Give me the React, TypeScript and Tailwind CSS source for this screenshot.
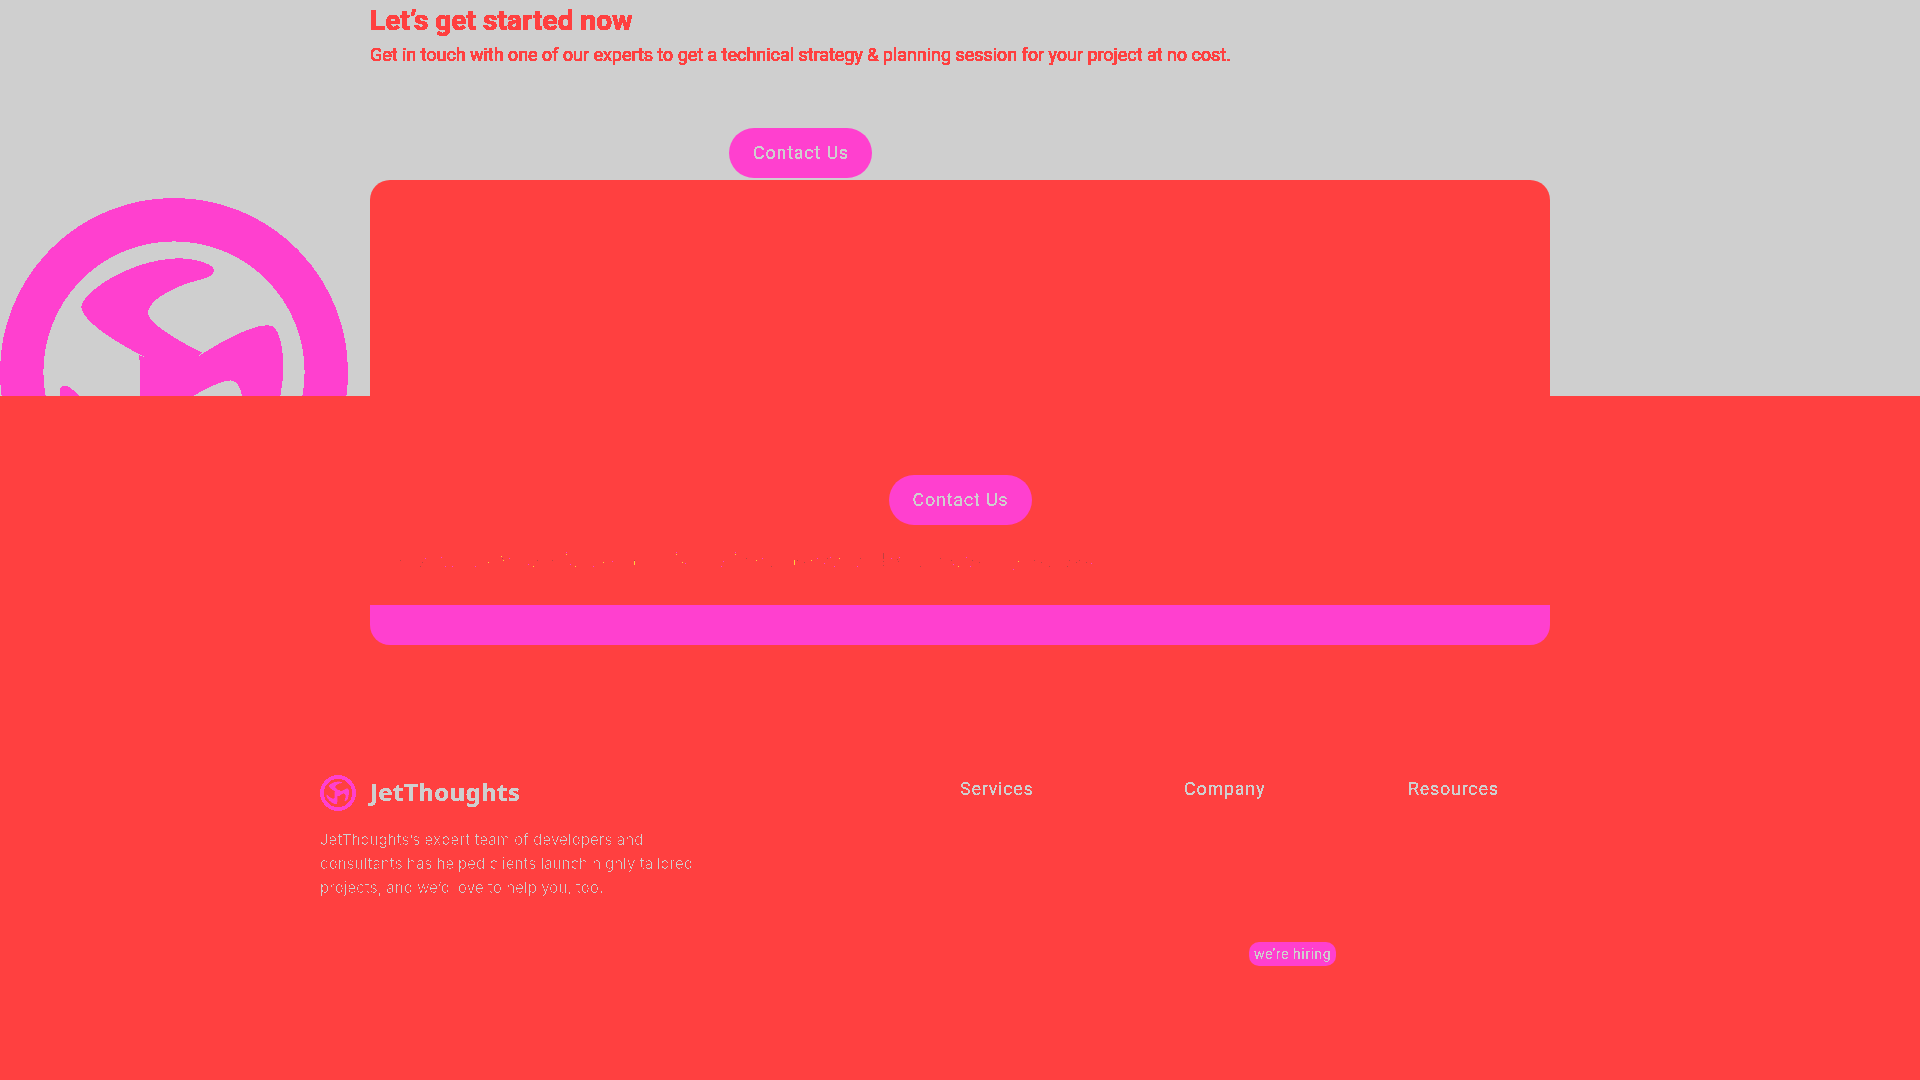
import React from "react";

const BLADE =
  "M-29-15C-50-25-92.7-50-92.7-65C-92.7-78-47-112 4-113.7C24-113.7 40-107 40-102C40-93 22-93 4-85C-14-77-26-68-26-58.5C-26-48 12-27 28.3-19.3L0 6Z";

const BLADE_TURNS = [undefined, "rotate(120 -2.5 0.2)", "rotate(240 -2.5 0.2)"];

function LogoMark({ className, small = false }: { className: string; small?: boolean }) {
  return (
    <svg viewBox="-174 -174 348 348" className={className} fill="#ff40cf" shapeRendering="crispEdges">
      <circle r={small ? 155 : 152.3} fill="none" stroke="#ff40cf" strokeWidth={small ? 36 : 43.4} />
      <g stroke={small ? "#ff4040" : "none"} strokeWidth="6">
        {BLADE_TURNS.map((turn, i) => (
          <path key={i} d={BLADE} transform={turn} />
        ))}
      </g>
      <circle cx="-2" r="30" />
    </svg>
  );
}

// Hard-edged text: each filter cuts the glyph coverage at its own level.
function CrispFilters() {
  const levels = [
    { id: "bold", table: "0 1 1 1 1 1 1 1 1 1 1 1 1 1 1 1 1 1 1 1 1 1 1 1 1 1 1 1 1 1" },
    { id: "mid", table: "0 0 0 1 1 1 1 1" },
    { id: "half", table: "0 0 1 1" },
    { id: "logo", table: "0 0 1 1 1 1" },
    { id: "thin", table: "0 0 0 0 0 0 0 0 0 0 1 1" },
  ];
  return (
    <svg className="absolute h-0 w-0" aria-hidden="true">
      {levels.map((l) => (
        <filter key={l.id} id={l.id} x="-5%" y="-20%" width="110%" height="140%" colorInterpolationFilters="sRGB">
          <feComponentTransfer>
            <feFuncA type="discrete" tableValues={l.table} />
          </feComponentTransfer>
        </filter>
      ))}
    </svg>
  );
}

function ContactButton() {
  return (
    <a className="flex h-[50px] w-[143px] items-center rounded-full bg-[#ff40cf] px-6 text-lg tracking-[0.75px] whitespace-nowrap text-[#cfcfcf]">
      <span className="[filter:url(#mid)]">Contact Us</span>
    </a>
  );
}

type Speck = [number, number, number?];

const PINK: Speck[] = [
  [25, 18], [41, 17], [45, 26], [52, 26], [75, 26], [109, 18], [128, 24], [166, 12], [170, 24], [193, 26], [212, 21],
  [276, 12], [285, 23], [321, 26], [323, 21], [335, 12], [362, 18], [417, 18], [424, 23], [430, 17], [434, 26], [457, 26],
  [491, 18], [499, 17], [553, 24], [566, 17], [570, 26], [613, 29], [691, 23],
];
const YELLOW: Speck[] = [
  [88, 22], [101, 16], [103, 20], [133, 26], [166, 14], [175, 26], [203, 22], [234, 21, 4], [276, 14], [282, 22],
  [335, 14], [356, 20], [394, 20, 5], [411, 20], [439, 18], [558, 26], [618, 21],
];
const DARK: Speck[] = [
  [0, 20], [22, 22], [20, 26], [102, 18], [137, 20], [152, 20], [234, 20], [346, 18], [371, 26], [397, 20], [404, 22],
  [427, 18], [460, 18], [483, 13, 6], [483, 21], [483, 25], [497, 19], [498, 21], [520, 26], [540, 18], [551, 20],
  [572, 20], [579, 22], [634, 20], [641, 22], [649, 26], [667, 26], [669, 20], [676, 22], [679, 20], [686, 22],
];

function Specks() {
  const layers: [string, Speck[]][] = [["#bf4040", DARK], ["#ff40cf", PINK], ["#ffcf40", YELLOW]];
  return (
    <svg width="700" height="40" className="mt-[15px] ml-[30px] shrink-0" shapeRendering="crispEdges">
      {layers.map(([fill, dots]) => (
        <g key={fill} fill={fill}>
          {dots.map(([x, y, h = 1], i) => (
            <rect key={i} x={x} y={y} width="1" height={h} />
          ))}
        </g>
      ))}
    </svg>
  );
}

export default function App() {
  return (
    <div className="flex h-[1080px] w-[1920px] flex-col overflow-hidden bg-[#ff4040] font-['Roboto',sans-serif]">
      <CrispFilters />
      <section className="flex h-[396px] shrink-0 overflow-hidden bg-[#cfcfcf]">
        <div className="w-[370px] shrink-0 pt-[198px]">
          <LogoMark className="h-[348px] w-[348px]" />
        </div>
        <div className="flex w-[1180px] flex-col">
          <h2 className="mt-px h-10 text-[28px] leading-10 font-bold tracking-[0.04px] whitespace-nowrap text-[#ff4040] [filter:url(#bold)]">
            Let’s get started now
          </h2>
          <p className="mt-0.5 h-[27px] text-lg leading-6 tracking-[-0.045px] whitespace-nowrap text-[#ff4040] [filter:url(#bold)]">
            Get in touch with one of our experts to get a technical strategy &amp; planning session for your project at no
            cost.
          </p>
          <div className="mt-[58px] flex pl-[359px]">
            <ContactButton />
          </div>
          <div className="mt-0.5 flex-1 rounded-t-[20px] bg-[#ff4040]" />
        </div>
      </section>

      <section className="mx-auto flex h-[249px] w-[1180px] shrink-0 flex-col overflow-hidden rounded-b-[20px]">
        <div className="flex justify-center pt-[79px]">
          <ContactButton />
        </div>
        <Specks />
        <div className="mt-auto h-10 shrink-0 bg-[#ff40cf]" />
      </section>

      <footer className="mt-[130px] flex pl-80 text-[#cfcfcf]">
        <div className="w-[640px]">
          <div className="flex h-9 items-center gap-[14px]">
            <LogoMark small className="h-9 w-9" />
            <span className="-mt-0.5 font-['Noto_Sans',sans-serif] text-2xl font-bold tracking-[0.4px] [filter:url(#logo)]">
              JetThoughts
            </span>
          </div>
          <p className="mt-[17px] font-['Inter',sans-serif] text-[15px] leading-6 tracking-[0.06px] [filter:url(#thin)]">
            JetThoughts’s expert team of developers and
            <br />
            consultants has helped clients launch highly tailored
            <br />
            projects, and we’d love to help you, too.
          </p>
        </div>
        <div className="grid grid-cols-[224px_224px_224px] text-lg leading-7 tracking-[0.72px]">
          <div>
            <h3 className="[filter:url(#mid)]">Services</h3>
          </div>
          <div>
            <h3 className="[filter:url(#mid)]">Company</h3>
            <span className="mt-[139px] ml-[65px] flex h-6 w-[87px] items-center justify-center rounded-[10px] bg-[#ff40cf] text-sm tracking-[0.55px]">
              <span className="[filter:url(#half)]">we’re hiring</span>
            </span>
          </div>
          <div>
            <h3 className="[filter:url(#mid)]">Resources</h3>
          </div>
        </div>
      </footer>
    </div>
  );
}
